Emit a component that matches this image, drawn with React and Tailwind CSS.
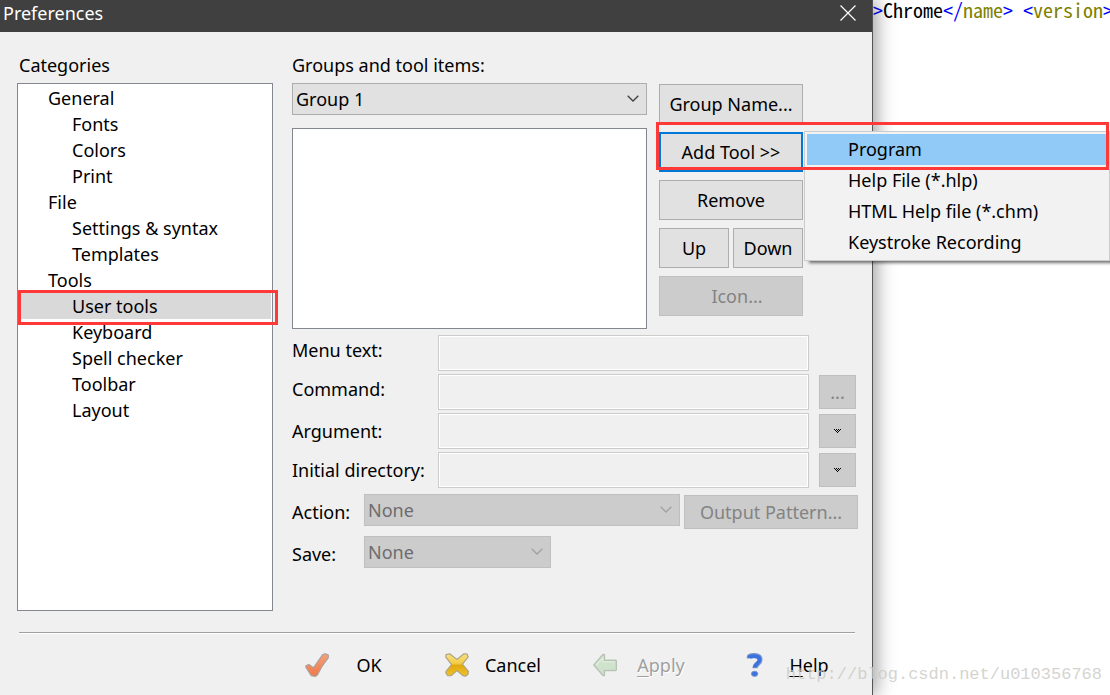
// src/App.jsx
import React, { useState } from "react";

const CATEGORIES = [
  { label: "General", level: 0 },
  { label: "Fonts", level: 1 },
  { label: "Colors", level: 1 },
  { label: "Print", level: 1 },
  { label: "File", level: 0 },
  { label: "Settings & syntax", level: 1 },
  { label: "Templates", level: 1 },
  { label: "Tools", level: 0 },
  { label: "User tools", level: 1 },
  { label: "Keyboard", level: 1 },
  { label: "Spell checker", level: 1 },
  { label: "Toolbar", level: 1 },
  { label: "Layout", level: 1 },
];

const MENU_ITEMS = ["Program", "Help File (*.hlp)", "HTML Help file (*.chm)", "Keystroke Recording"];

const button = "h-10 border border-[#adadad] bg-[#e1e1e1] text-center";
const disabledButton = "border border-[#bfbfbf] bg-[#cccccc] text-[#838383]";

function Chevron({ className = "" }) {
  return (
    <svg viewBox="0 0 12 7" className={`pointer-events-none absolute right-2 top-3 h-[7px] w-3 ${className}`} fill="none" stroke="currentColor" strokeWidth="1.3">
      <path d="M0.7 0.7 6 6 11.3 0.7" />
    </svg>
  );
}

function Select({ id, value, disabled = false, className = "" }) {
  return (
    <div className={`relative ${className}`}>
      <select
        id={id}
        disabled={disabled}
        defaultValue={value}
        className={`block h-8 w-full appearance-none border pl-[3px] pr-8 opacity-100 ${
          disabled ? "border-[#bfbfbf] bg-[#cccccc] text-[#6d6d6d]" : "border-[#adadad] bg-[#e1e1e1]"
        }`}
      >
        <option>{value}</option>
      </select>
      <Chevron className={disabled ? "text-[#a0a0a0]" : "text-[#404040]"} />
    </div>
  );
}

// Dithered arrow of a disabled drop-down button
function DropArrow() {
  return (
    <svg viewBox="0 0 7 4" className="mx-auto h-1 w-[7px]" fill="#000" shapeRendering="crispEdges">
      <path d="M0 0h1v1H0zM2 0h1v1H2zM4 0h1v1H4zM6 0h1v1H6zM1 1h1v1H1zM3 1h1v1H3zM5 1h1v1H5zM2 2h1v1H2zM4 2h1v1H4zM3 3h1v1H3z" />
    </svg>
  );
}

function Field({ id, label, labelClass = "", children }) {
  return (
    <div className="flex h-9 items-center">
      <label htmlFor={id} className={`w-[146px] shrink-0 ${labelClass}`}>{label}</label>
      <input
        id={id}
        type="text"
        disabled
        className="h-9 min-w-0 flex-1 border border-[#cccccc] bg-[#f0f0f0] px-1 shadow-[inset_0_0_0_1px_#fff]"
      />
      <div className="ml-[10px] mr-0.5 w-[37px] shrink-0">{children}</div>
    </div>
  );
}

function OkIcon() {
  return (
    <svg viewBox="0 0 24 24" className="h-6 w-6 shrink-0">
      <defs>
        <linearGradient id="ok" x1="0" y1="0" x2="0" y2="1">
          <stop offset="0" stopColor="#f4a07a" />
          <stop offset="1" stopColor="#ee7a4a" />
        </linearGradient>
      </defs>
      <path d="M0.8 14.2 1 12.6 4 11.4 8.4 14.8 17.8 1.4 20 0.7 23.2 1.8 23.4 4.6 17.6 12.6 12.4 22 10 23.4 6.2 22.6Z" fill="url(#ok)" stroke="#a9a29e" strokeWidth="1.1" strokeLinejoin="round" />
    </svg>
  );
}

function CancelIcon() {
  return (
    <svg viewBox="0 0 24 24" className="h-6 w-6 shrink-0">
      <defs>
        <linearGradient id="cancel" x1="0" y1="0" x2="0" y2="1">
          <stop offset="0" stopColor="#f8df85" />
          <stop offset="0.42" stopColor="#f3cd48" />
          <stop offset="0.52" stopColor="#e2a90f" />
          <stop offset="1" stopColor="#efc22f" />
        </linearGradient>
      </defs>
      <path d="M0.8 4.2 1 1.6 4.6 0.8 12 6.4 19 0.8 22 1 23.2 4 17.4 11.2 23.4 18.4 23 21.4 20.4 23.2 17.8 22.6 12 17.6 6 22.8 2.8 22.8 0.8 20 1.2 18 6.6 11.6Z" fill="url(#cancel)" stroke="#aaa184" strokeWidth="1.1" strokeLinejoin="round" />
    </svg>
  );
}

function ApplyIcon() {
  return (
    <svg viewBox="0 0 24 24" className="h-6 w-6 shrink-0">
      <path d="M0.8 12 10 1.6H11.4V7.2H22.4Q23.4 7.2 23.4 8.2V16.4Q23.4 17.4 22.4 17.4H11.4V22.6H10Z" fill="#cfe3cc" stroke="#b9c4b7" strokeWidth="1.5" strokeLinejoin="round" />
      <path d="M3.2 12 9.8 4.8V8.9H21.8" fill="none" stroke="#dfeedd" strokeWidth="1.2" />
    </svg>
  );
}

function HelpIcon() {
  return (
    <svg viewBox="0 0 24 24" className="h-6 w-6 shrink-0" fill="none" strokeLinejoin="round">
      <path d="M8.4 5.4V3.6C10 2.4 19 1.2 19 6.8 19 11 14 10.6 14 15.2" stroke="#8298c8" strokeWidth="5.2" />
      <path d="M8.4 4.8V4C10 3 18.6 1.8 18.6 6.8 18.6 10.6 13.8 10.6 13.8 14.6" stroke="#3a72e0" strokeWidth="3.6" />
      <ellipse cx="13.6" cy="20.8" rx="3.2" ry="2.6" fill="#3a72e0" stroke="#8298c8" />
    </svg>
  );
}

function FooterButton({ icon, children, disabled = false, labelClass = "w-20" }) {
  return (
    <button
      type="button"
      disabled={disabled}
      className={`flex h-10 items-center gap-1 ${disabled ? "text-[#a0a0a0]" : ""}`}
    >
      {icon}
      <span className={`text-center ${labelClass}`}>{children}</span>
    </button>
  );
}

function Categories({ selected, onSelect }) {
  return (
    <nav className="w-64 shrink-0">
      <h2 className="mb-[5px] pl-0.5 leading-[26px]">Categories</h2>
      <ul className="h-[528px] border border-[#828790] bg-white px-px py-px">
        {CATEGORIES.map((c) => (
          <li key={c.label} className="relative">
            <button
              type="button"
              onClick={() => onSelect(c.label)}
              className={`block h-[26px] w-full text-left leading-[26px] ${c.level ? "pl-[53px]" : "pl-[29px]"} ${
                c.label === selected ? "bg-[#d9d9d9]" : ""
              }`}
            >
              {c.label}
            </button>
            {c.label === "User tools" && (
              <span className="pointer-events-none absolute -left-px -right-[7px] -top-[3px] z-10 h-[35px] border-3 border-[#ff3838]" />
            )}
          </li>
        ))}
      </ul>
    </nav>
  );
}

function AddTool() {
  const [open, setOpen] = useState(true);

  return (
    <div className="relative">
      <button
        type="button"
        onClick={() => setOpen((v) => !v)}
        className="h-10 w-full border-2 border-[#0078d7] bg-[#e1e1e1] text-center"
      >
        Add Tool &gt;&gt;
      </button>

      {open && (
        <div role="menu" className="absolute -top-px left-full ml-px w-[306px] border border-[#cccccc] bg-[#f2f2f2] p-0.5 shadow-[4px_3px_3px_-1px_rgba(0,0,0,0.55)]">
          {MENU_ITEMS.map((item, i) => (
            <button
              key={item}
              role="menuitem"
              type="button"
              className={`block h-[31px] w-full pl-[41px] text-left leading-[31px] ${i === 0 ? "bg-[#91c9f7]" : ""}`}
            >
              {item}
            </button>
          ))}
        </div>
      )}

      <span className="pointer-events-none absolute -left-[3px] -top-[10px] h-12 w-[453px] border-3 border-[#ff3838]" />
    </div>
  );
}

export default function App() {
  const [selected, setSelected] = useState("User tools");

  return (
    <div className="relative flex min-h-screen overflow-hidden bg-white font-['Noto_Sans','Open_Sans',sans-serif] text-lg leading-[26px] text-black">
      {/* Preferences dialog */}
      <section className="relative z-10 flex min-w-0 flex-1 flex-col border-r border-[#555555] bg-[#f0f0f0] shadow-[3px_0_18px_rgba(0,0,0,0.4)]">
        <header className="flex h-8 items-center justify-between bg-[#404040] pl-[3px] pr-4 text-white">
          <h1 className="pb-1.5">Preferences</h1>
          <button type="button" aria-label="Close" className="pb-1.5">
            <svg viewBox="0 0 16 16" className="h-4 w-4" fill="none" stroke="currentColor" strokeWidth="1.2">
              <path d="M0.5 0.5 15.5 15.5M15.5 0.5 0.5 15.5" />
            </svg>
          </button>
        </header>

        <div className="flex gap-[19px] pl-[17px] pr-[14px] pt-5">
          <Categories selected={selected} onSelect={setSelected} />

          <div className="min-w-0 flex-1">
            {/* Groups and tool buttons */}
            <div className="flex gap-3 pr-[55px]">
              <div className="min-w-0 flex-1">
                <label htmlFor="group" className="mb-[5px] block">Groups and tool items:</label>
                <Select id="group" value="Group 1" />
                <ul className="mt-[13px] h-[201px] border border-[#828790] bg-white" />
              </div>
              <div className="mt-8 flex w-36 shrink-0 flex-col gap-2">
                <button type="button" className={button}>Group Name...</button>
                <div className="relative z-20">
                  <AddTool />
                </div>
                <button type="button" className={button}>Remove</button>
                <div className="flex gap-1">
                  <button type="button" className={`flex-1 ${button}`}>Up</button>
                  <button type="button" className={`flex-1 ${button}`}>Down</button>
                </div>
                <button type="button" disabled className={`h-10 pl-3 ${disabledButton}`}>Icon...</button>
              </div>
            </div>

            {/* Tool properties */}
            <div className="mt-1.5 flex flex-col gap-[3px]">
              <Field id="menu-text" label="Menu text:" labelClass="pb-1.5" />
              <Field id="command" label="Command:" labelClass="pb-1.5">
                <button type="button" disabled className={`block h-[34px] w-full ${disabledButton}`}>...</button>
              </Field>
              <Field id="argument" label="Argument:">
                <button type="button" disabled aria-label="Argument variables" className={`block h-[34px] w-full ${disabledButton}`}>
                  <DropArrow />
                </button>
              </Field>
              <Field id="directory" label="Initial directory:">
                <button type="button" disabled aria-label="Directory variables" className={`block h-[34px] w-full ${disabledButton}`}>
                  <DropArrow />
                </button>
              </Field>
            </div>

            <div className="mt-1.5 flex items-start gap-1">
              <label htmlFor="action" className="w-[68px] shrink-0 pt-[5px]">Action:</label>
              <Select id="action" value="None" disabled className="min-w-0 flex-1" />
              <button type="button" disabled className={`mt-px h-[34px] w-[174px] shrink-0 ${disabledButton}`}>
                Output Pattern...
              </button>
            </div>
            <div className="mt-[7px] flex items-start gap-1">
              <label htmlFor="save" className="w-[68px] shrink-0 pt-[5px]">Save:</label>
              <Select id="save" value="None" disabled className="w-[187px]" />
            </div>
          </div>
        </div>

        <footer className="ml-[19px] mr-[17px] mt-[21px] border-t border-[#a0a0a0] pt-3 shadow-[inset_0_1px_0_#fff]">
          <div className="flex justify-end gap-10 pr-1.5">
            <FooterButton icon={<OkIcon />} labelClass="w-18">OK</FooterButton>
            <FooterButton icon={<CancelIcon />}>Cancel</FooterButton>
            <FooterButton icon={<ApplyIcon />} disabled>
              <span className="[text-shadow:1px_1px_0_#fff]"><u className="underline-offset-4">A</u>pply</span>
            </FooterButton>
            <FooterButton icon={<HelpIcon />}>
              <u className="underline-offset-4">H</u>elp
            </FooterButton>
          </div>
        </footer>
      </section>

      {/* Editor behind the dialog */}
      <pre className="w-[237px] shrink-0 font-['Noto_Sans_Mono_CJK_SC','Liberation_Mono',monospace] text-xl leading-5 text-[#0000ff]">
        &gt;<span className="text-black">Chrome</span>&lt;/<span className="text-[#808000]">name</span>&gt; &lt;<span className="text-[#808000]">version</span>&gt;
      </pre>

      <p className="pointer-events-none absolute bottom-2 right-2 z-20 font-['Liberation_Mono',monospace] text-[17px] leading-6 text-[#c9c9c4]/80">
        http://blog.csdn.net/u010356768
      </p>
    </div>
  );
}
